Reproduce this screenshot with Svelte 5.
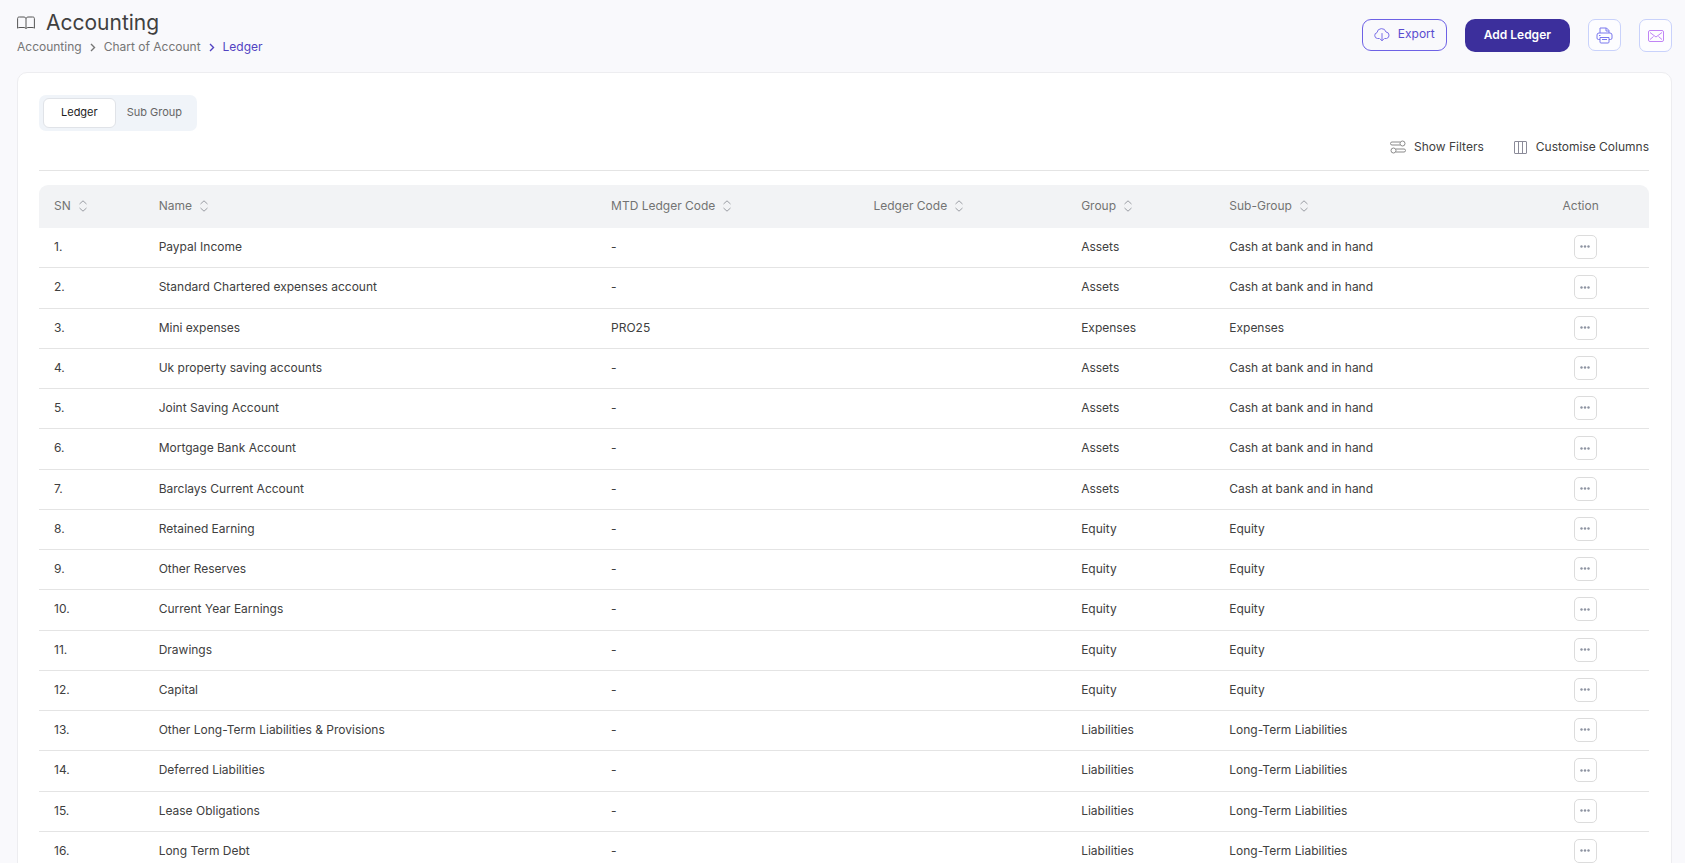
<script lang="ts">
  type Ledger = { name: string; code: string; group: string; subGroup: string };

  const columns = ['SN', 'Name', 'MTD Ledger Code', 'Ledger Code', 'Group', 'Sub-Group'];

  const bank = 'Cash at bank and in hand';
  const longTerm = 'Long-Term Liabilities';

  const ledgers: Ledger[] = [
    { name: 'Paypal Income', code: '-', group: 'Assets', subGroup: bank },
    { name: 'Standard Chartered expenses account', code: '-', group: 'Assets', subGroup: bank },
    { name: 'Mini expenses', code: 'PRO25', group: 'Expenses', subGroup: 'Expenses' },
    { name: 'Uk property saving accounts', code: '-', group: 'Assets', subGroup: bank },
    { name: 'Joint Saving Account', code: '-', group: 'Assets', subGroup: bank },
    { name: 'Mortgage Bank Account', code: '-', group: 'Assets', subGroup: bank },
    { name: 'Barclays Current Account', code: '-', group: 'Assets', subGroup: bank },
    { name: 'Retained Earning', code: '-', group: 'Equity', subGroup: 'Equity' },
    { name: 'Other Reserves', code: '-', group: 'Equity', subGroup: 'Equity' },
    { name: 'Current Year Earnings', code: '-', group: 'Equity', subGroup: 'Equity' },
    { name: 'Drawings', code: '-', group: 'Equity', subGroup: 'Equity' },
    { name: 'Capital', code: '-', group: 'Equity', subGroup: 'Equity' },
    { name: 'Other Long-Term Liabilities & Provisions', code: '-', group: 'Liabilities', subGroup: longTerm },
    { name: 'Deferred Liabilities', code: '-', group: 'Liabilities', subGroup: longTerm },
    { name: 'Lease Obligations', code: '-', group: 'Liabilities', subGroup: longTerm },
    { name: 'Long Term Debt', code: '-', group: 'Liabilities', subGroup: longTerm }
  ];

  let tab = $state('Ledger');
</script>

<div class="page">
  <header class="topbar">
    <div>
      <div class="title">
        <svg width="18" height="14" viewBox="0 0 18 14" fill="none" stroke="#555" aria-hidden="true">
          <path d="M9 2.500C8.500 1.200 7.500 1 6 1H2.500C1 1 .6 1.500.6 2.500v9.700c.6-.6 1.200-.7 2.400-.7h3c1.500 0 2.500.2 3 1 .5-.8 1.500-1 3-1h3c1.200 0 1.800.1 2.400.7V2.500c0-1-.4-1.500-1.900-1.500H12c-1.500 0-2.500.2-3 1.500zm0 0v10" />
        </svg>
        <h1>Accounting</h1>
      </div>
      <nav class="breadcrumb" aria-label="Breadcrumb">
        <a href="#accounting">Accounting</a>
        <svg width="6" height="10" viewBox="0 0 6 10" aria-hidden="true"><path d="M1 2 4.500 5.500 1 9" /></svg>
        <a href="#chart">Chart of Account</a>
        <svg class="current" width="6" height="10" viewBox="0 0 6 10" aria-hidden="true"><path d="M1 2 4.500 5.500 1 9" /></svg>
        <a class="current" href="#ledger" aria-current="page">Ledger</a>
      </nav>
    </div>

    <div class="actions">
      <button class="export">
        <svg width="16" height="14" viewBox="0 0 16 14" fill="none" stroke="#7a70e8" stroke-linecap="round" stroke-linejoin="round" aria-hidden="true">
          <path d="M5 10.500H3.500A3 3 0 0 1 3 4.600 4.600 4.600 0 0 1 12 4a3.300 3.300 0 0 1 .5 6.500H11M8 5.500v7M6 10.800l2 2 2-2" />
        </svg>
        <span>Export</span>
      </button>
      <button class="add">Add Ledger</button>
      <button class="square" aria-label="Print">
        <svg width="17" height="17" viewBox="0 0 17 17" fill="none" stroke="#7b78ee" stroke-linejoin="round" aria-hidden="true">
          <path d="M4 6V1h6.500L13 3.500V6M10 1v3h3M4 12.500H2.500A1.500 1.500 0 0 1 1 11V8a2 2 0 0 1 2-2h11a2 2 0 0 1 2 2v3a1.500 1.500 0 0 1-1.500 1.500H13M4 10.500h9V15a1 1 0 0 1-1 1H5a1 1 0 0 1-1-1zM6 12.500h5M3 8.500h1.500" />
        </svg>
      </button>
      <button class="square mail" aria-label="Email">
        <svg width="16" height="12" viewBox="0 0 16 12" fill="none" stroke="#c084f5" stroke-linejoin="round" aria-hidden="true">
          <rect x=".5" y=".5" width="15" height="11" rx="1.500" />
          <path d="M2 2.500 8 7l6-4.500M2 9.500 5.500 6.500M14 9.500 10.500 6.500" />
        </svg>
      </button>
    </div>
  </header>

  <main class="card">
    <div class="tabs" role="tablist">
      {#each ['Ledger', 'Sub Group'] as name}
        <button role="tab" aria-selected={tab === name} class:active={tab === name} onclick={() => (tab = name)}>
          {name}
        </button>
      {/each}
    </div>

    <div class="tools">
      <button>
        <svg width="16" height="14" viewBox="0 0 16 14" fill="none" stroke="#8a8a8a" aria-hidden="true">
          <path d="M10 2H2a1.500 1.500 0 0 0 0 3h8M6 9h8a1.500 1.500 0 0 1 0 3H6" />
          <circle cx="12.500" cy="3.500" r="2.500" />
          <circle cx="3.500" cy="10.500" r="2.500" />
        </svg>
        Show Filters
      </button>
      <button>
        <svg width="14" height="13" viewBox="0 0 14 13" fill="none" stroke="#8b8b98" aria-hidden="true">
          <path d="M1 .5h11a.5.5 0 0 1 .5.5v11a.5.5 0 0 1-.5.5H1a.5.5 0 0 1-.5-.5V1A.5.5 0 0 1 1 .5zM4.500.5v12M8.500.5v12" />
        </svg>
        Customise Columns
      </button>
    </div>

    <table>
      <thead>
        <tr>
          {#each columns as column}
            <th>
              <button class="sort">
                {column}
                <svg width="8" height="12" viewBox="0 0 8 12" aria-hidden="true"><path d="M.5 4 4 .8 7.500 4M.5 8 4 11.200 7.500 8" /></svg>
              </button>
            </th>
          {/each}
          <th>Action</th>
        </tr>
      </thead>
      <tbody>
        {#each ledgers as ledger, i}
          <tr>
            <td>{i + 1}.</td>
            <td>{ledger.name}</td>
            <td>{ledger.code}</td>
            <td></td>
            <td>{ledger.group}</td>
            <td>{ledger.subGroup}</td>
            <td>
              <button class="more" aria-label="Actions for {ledger.name}">
                <svg width="10" height="3" viewBox="0 0 10 3" fill="#8d93a1" aria-hidden="true">
                  <circle cx="1.500" cy="1.500" r="1.200" /><circle cx="5" cy="1.500" r="1.200" /><circle cx="8.500" cy="1.500" r="1.200" />
                </svg>
              </button>
            </td>
          </tr>
        {/each}
      </tbody>
    </table>
  </main>
</div>

<style>
  :global(body) {
    background: #f9f9fc;
    overflow: hidden;
  }

  .page {
    height: 100vh;
    overflow: hidden;
    padding: 0 13px 0 17px;
    box-sizing: border-box;
    font-family: Inter, 'Liberation Sans', sans-serif;
    font-size: 12px;
    line-height: 20px;
    color: #404040;
  }

  button {
    font: inherit;
    color: inherit;
    background: none;
    border: 0;
    padding: 0;
    cursor: pointer;
  }

  svg {
    display: block;
    flex: none;
  }

  .topbar {
    display: flex;
    justify-content: space-between;
    height: 72px;
  }

  .title {
    display: flex;
    align-items: center;
    gap: 11px;
    height: 34px;
    padding-top: 6px;
  }

  h1 {
    margin: 0;
    font-size: 21px;
    font-weight: 400;
    line-height: 28px;
  }

  .breadcrumb {
    display: flex;
    align-items: center;
    gap: 8px;
    line-height: 14px;
  }

  .breadcrumb a {
    color: #757575;
    text-decoration: none;
  }

  .breadcrumb svg {
    fill: none;
    stroke: #757575;
    stroke-width: 1.4;
  }

  .breadcrumb a.current {
    color: #5243c2;
  }

  .breadcrumb svg.current {
    stroke: #5243c2;
  }

  .actions {
    display: flex;
    align-items: flex-start;
    gap: 18px;
    padding-top: 19px;
  }

  .export {
    display: flex;
    align-items: center;
    gap: 8px;
    height: 32px;
    padding: 0 11px;
    border: 1px solid #6e62e5;
    border-radius: 9px;
    color: #5a4bd0;
  }

  .export span {
    padding-bottom: 2px;
  }

  .add {
    height: 33px;
    padding: 0 19px 2px;
    border-radius: 10px;
    background: #3c2f9c;
    color: #fff;
    font-weight: 600;
  }

  .square {
    display: grid;
    place-items: center;
    width: 33px;
    height: 32px;
    border: 1px solid #c9d2fb;
    border-radius: 7px;
    background: #fdfdff;
  }

  .square.mail {
    height: 33px;
  }

  .card {
    padding: 22px 22px 0 21px;
    border: 1px solid #ededf0;
    border-radius: 10px;
    background: #fff;
  }

  .tabs {
    display: inline-flex;
    padding: 3px 4px;
    border-radius: 7px;
    background: #f0f4f9;
    font-size: 11px;
  }

  .tabs button {
    height: 30px;
    padding: 0 10px 2px;
    border: 1px solid transparent;
    border-radius: 6px;
    color: #666;
  }

  .tabs button.active {
    padding: 0 17px 2px;
    border-color: #e0e3e8;
    background: #fff;
    color: #1c1c1c;
  }

  .tools {
    display: flex;
    justify-content: flex-end;
    gap: 30px;
    padding: 6px 0 13px;
    border-bottom: 1px solid #e4e4e4;
  }

  .tools button {
    display: flex;
    align-items: center;
    gap: 8px;
  }

  table {
    width: 100%;
    margin-top: 14px;
    border-spacing: 0;
    table-layout: fixed;
  }

  th,
  td {
    box-sizing: border-box;
    padding: 0 15px 2px;
    text-align: left;
    font-weight: 400;
  }

  th {
    height: 43px;
    background: #f2f3f5;
    color: #737373;
  }

  th:nth-child(1) { width: 6.5%; }
  th:nth-child(2) { width: 28.1%; }
  th:nth-child(3) { width: 16.3%; }
  th:nth-child(4) { width: 12.9%; }
  th:nth-child(5) { width: 9.2%; }
  th:nth-child(6) { width: 20.7%; }

  th:first-child {
    border-top-left-radius: 9px;
  }

  th:last-child {
    border-top-right-radius: 9px;
  }

  td {
    height: 40px;
    border-bottom: 1px solid #e4e4e4;
  }

  tr:nth-child(4n + 2) td {
    height: 41px;
  }

  td:last-child {
    padding-left: 26px;
  }

  .sort {
    display: flex;
    align-items: center;
    gap: 8px;
    white-space: nowrap;
  }

  .sort svg {
    fill: none;
    stroke: #9a9da3;
  }

  .more {
    display: grid;
    place-items: center;
    width: 23px;
    height: 24px;
    border: 1px solid #dcdcdc;
    border-radius: 5px;
  }
</style>
